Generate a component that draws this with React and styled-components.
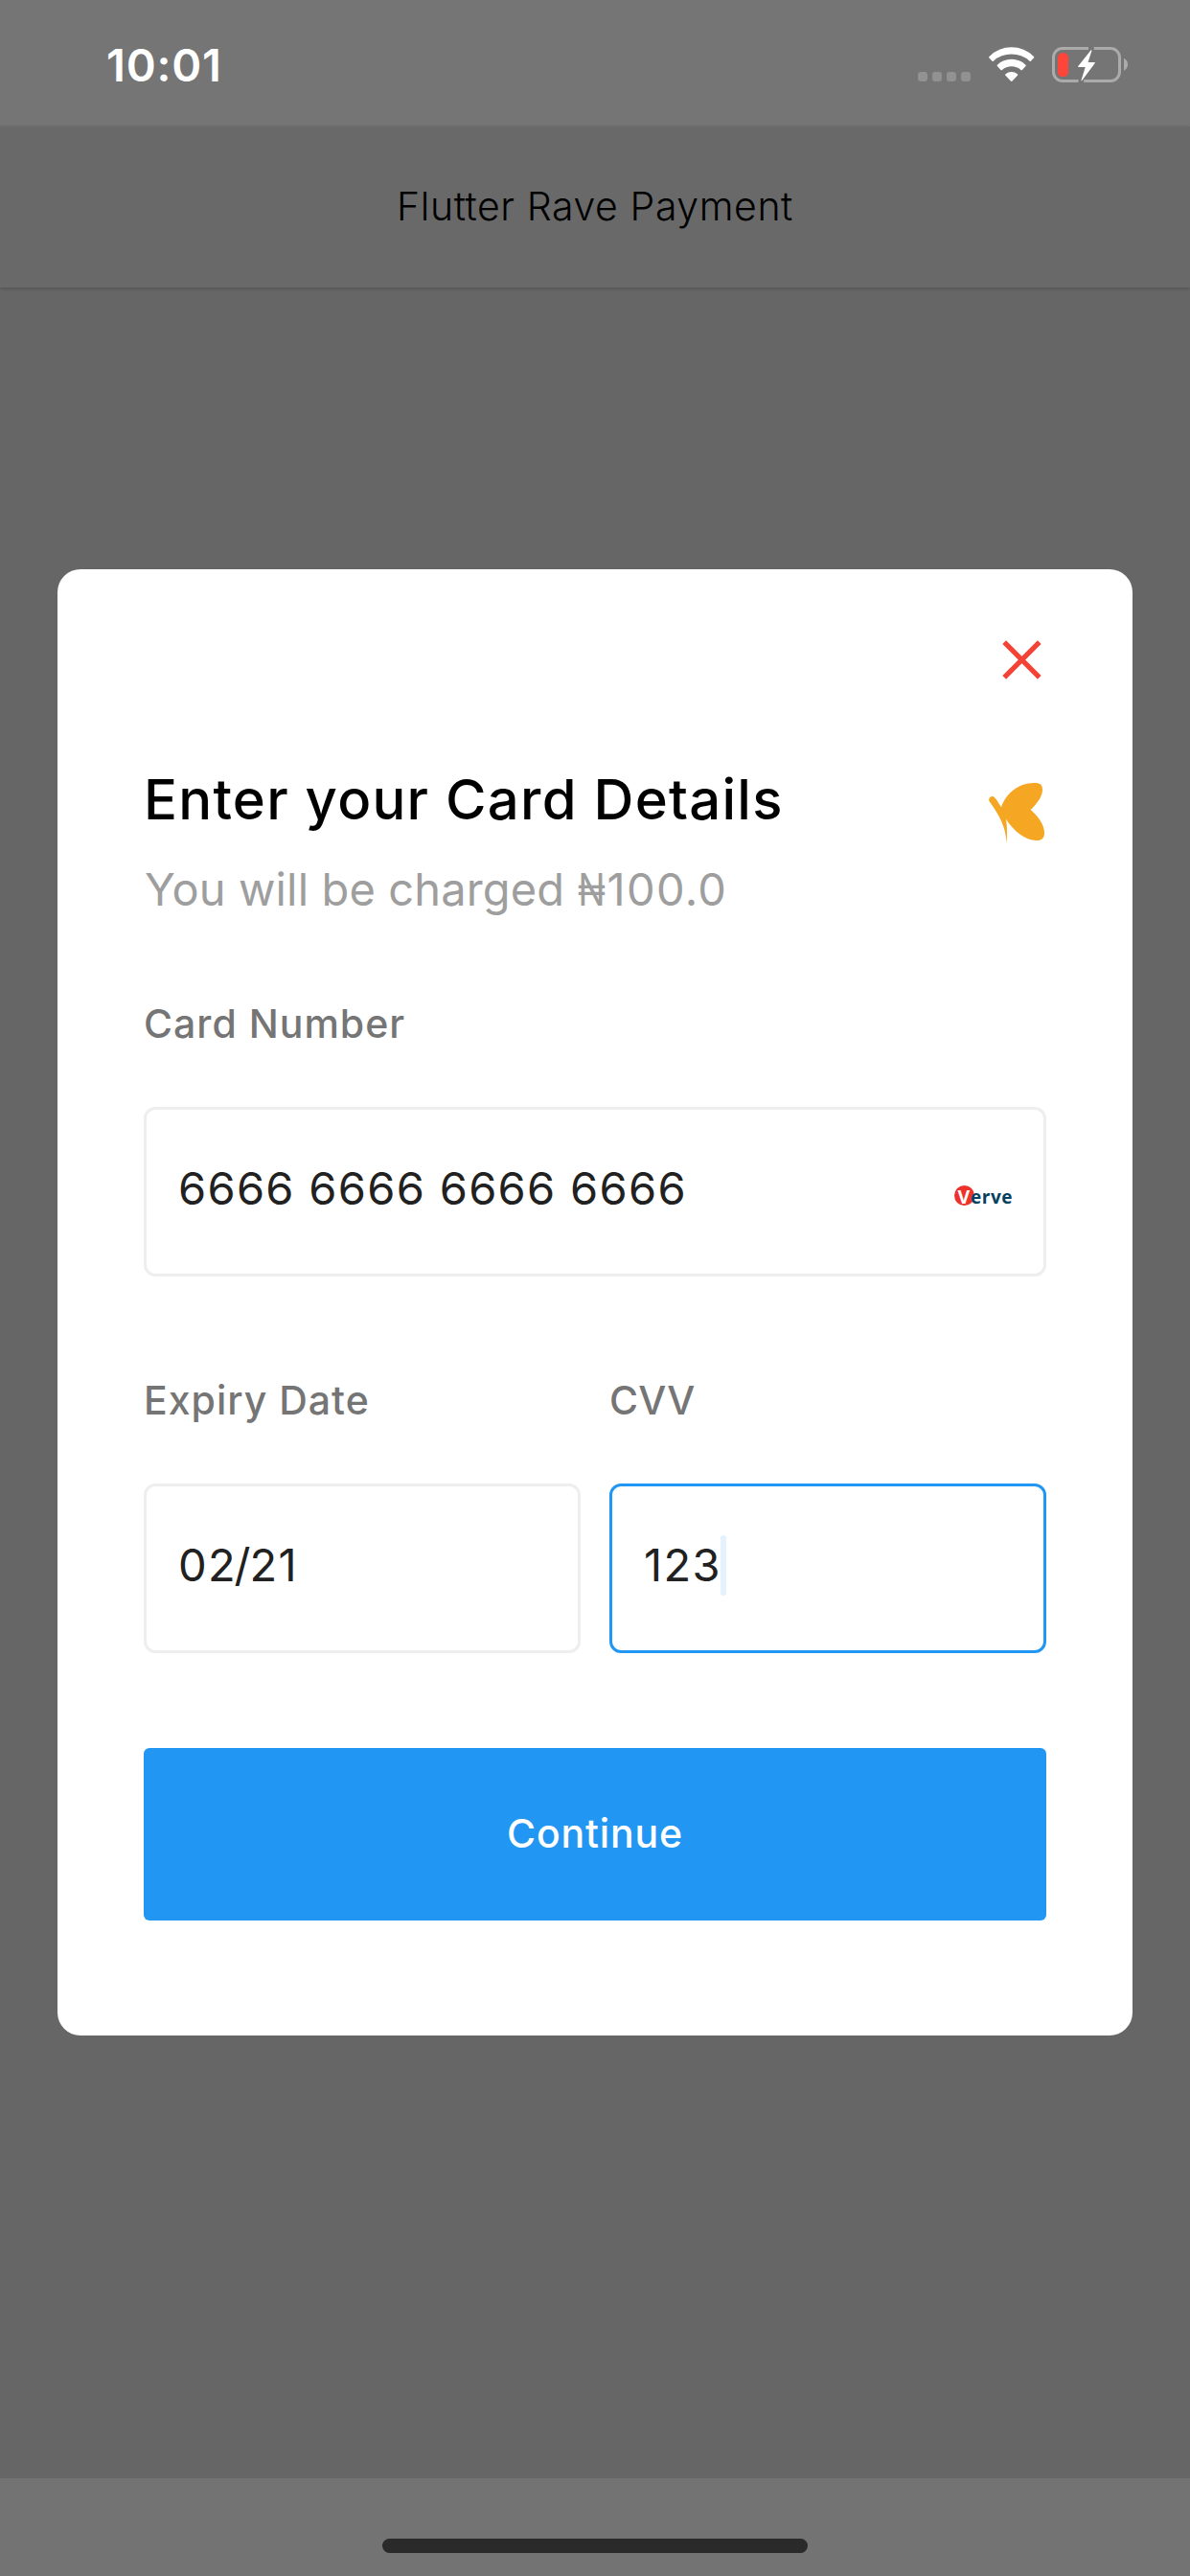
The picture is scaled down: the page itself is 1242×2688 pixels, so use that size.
import React from 'react';
import styled, { createGlobalStyle } from 'styled-components';

const GlobalStyle = createGlobalStyle`
  * { box-sizing: border-box; }
  body { margin: 0; background: #666; font-family: Inter, Roboto, sans-serif; }
  h1, h2, p { margin: 0; }
`;

const Screen = styled.div`
  width: 1242px;
  height: 2688px;
  display: flex;
  flex-direction: column;
  background: #666666;
  overflow: hidden;
`;

const StatusBar = styled.div`
  height: 132px;
  flex: none;
  display: flex;
  justify-content: space-between;
  padding: 0 63px 0 111px;
  background: #757575;
`;

const Time = styled.div`
  padding-top: 38px;
  font-size: 47px;
  line-height: 60px;
  font-weight: 600;
  letter-spacing: 0.78px;
  color: #fff;
`;

const StatusIcons = styled.div`
  display: flex;
  align-items: flex-start;
  padding-top: 49px;
`;

const Signal = styled.div`
  display: flex;
  gap: 5px;
  margin: 26px 18.5px 0 0;
`;

const SignalDot = styled.i`
  width: 10px;
  height: 10px;
  border-radius: 3px;
  background: #929292;
`;

const BatteryWrap = styled.span`
  display: flex;
  margin-left: 18.5px;
`;

const AppBar = styled.header`
  height: 168px;
  flex: none;
  display: flex;
  justify-content: center;
  padding-top: 55px;
  background: #696969;
  box-shadow: 0 1px 4px rgba(0, 0, 0, 0.22);
`;

const AppTitle = styled.h1`
  font-size: 41px;
  line-height: 56px;
  font-weight: 300;
  letter-spacing: 0.58px;
  color: #000;
`;

const Content = styled.main`
  flex: 1;
  padding: 294px 60px 0;
`;

const Dialog = styled.section`
  height: 1530px;
  padding: 74px 90px 0;
  border-radius: 24px;
  background: #fff;
`;

const CloseRow = styled.div`
  display: flex;
  justify-content: flex-end;
  height: 41px;
  padding-right: 5px;
`;

const Heading = styled.div`
  display: flex;
  justify-content: space-between;
  align-items: flex-start;
  margin-top: 89px;
  padding-right: 1px;
`;

const Logo = styled.svg`
  margin-top: 19px;
`;

const Title = styled.h2`
  font-size: 58px;
  line-height: 72px;
  font-weight: 500;
  letter-spacing: 1.27px;
  color: #000;
`;

const Charge = styled.p`
  margin-top: 30px;
  padding-left: 1px;
  font-size: 47px;
  line-height: 56px;
  letter-spacing: 0.13px;
  color: #9e9e9e;
  white-space: nowrap;
`;

const Amount = styled.span`
  letter-spacing: 1.31px;
`;

const Naira = styled.span`
  display: inline-block;
  width: 31px;
  transform: scaleX(0.8);
  transform-origin: left;
`;

const Fields = styled.div`
  display: grid;
  grid-template-columns: 1fr 1fr;
  gap: 105px 30px;
  margin-top: 88px;
`;

const FieldGroup = styled.label`
  display: flex;
  flex-direction: column;
  gap: 63px;
  grid-column: ${(p) => (p.$wide ? '1 / -1' : 'auto')};
`;

const Label = styled.span`
  font-size: 41px;
  line-height: 48px;
  font-weight: 500;
  letter-spacing: ${(p) => p.$tracking || 1}px;
  color: #757575;
`;

const Box = styled.span`
  display: flex;
  align-items: center;
  justify-content: space-between;
  height: 177px;
  padding: 0 33px;
  border: 3px solid ${(p) => (p.$active ? '#2196f3' : '#eeeeee')};
  border-radius: 12px;
`;

const Value = styled.span`
  display: flex;
  align-items: center;
  padding-bottom: 7px;
  font-size: 47px;
  line-height: 60px;
  letter-spacing: 1.31px;
  color: #212121;
`;

const Slash = styled.span`
  margin: 0 -2.4px;
`;

const Caret = styled.i`
  width: 6px;
  height: 63px;
  margin-left: -1px;
  border-radius: 3px;
  background: #e3f2fd;
`;

const Verve = styled.svg`
  margin-top: 8px;
  overflow: visible;
`;

const Submit = styled.button`
  display: block;
  width: 100%;
  height: 180px;
  margin-top: 99px;
  padding: 0 0 2px;
  border: 0;
  border-radius: 6px;
  background: #2196f3;
  color: #fff;
  font: 500 41px/48px Inter, Roboto, sans-serif;
  letter-spacing: 0.84px;
`;

const HomeArea = styled.footer`
  height: 102px;
  flex: none;
  display: flex;
  justify-content: center;
  padding-top: 63px;
  background: #737373;
`;

const HomeBar = styled.div`
  width: 444px;
  height: 15px;
  border-radius: 8px;
  background: #2a2a2a;
`;

const WifiIcon = () => (
  <svg width="48" height="36" viewBox="0 0 48 36" fill="#fff">
    <path d="M.5 9.9A33 33 0 0 1 46.9 9.9Q47.7 10.6 46.9 11.4L43.9 14.8Q43.3 15.3 42.6 14.7A28.4 28.4 0 0 0 4.8 14.7Q4.1 15.3 3.5 14.8L.5 11.4Q-.3 10.6 .5 9.9Z" />
    <path d="M8.9 18.7A21.5 21.5 0 0 1 38.5 18.7Q39.2 19.4 38.5 20.1L34.9 24Q34.2 24.7 33.5 24A15 15 0 0 0 13.9 24Q13.2 24.7 12.5 24L8.9 20.1Q8.2 19.4 8.9 18.7Z" />
    <path d="M17.5 28.2A9.5 9.5 0 0 1 29.9 28.2Q30.7 28.9 30 29.7L24.5 35.5Q23.7 36.3 22.9 35.5L17.4 29.7Q16.7 28.9 17.5 28.2Z" />
  </svg>
);

const BatteryIcon = () => (
  <svg width="81" height="37" viewBox="0 0 81 37">
    <g fill="none" stroke="#ababab" strokeWidth="3">
      <path d="M38 1.5H11A9.5 9.5 0 0 0 1.5 11V26A9.5 9.5 0 0 0 11 35.5H27.6" />
      <path d="M43.8 1.5H61A9.5 9.5 0 0 1 70.5 11V26A9.5 9.5 0 0 1 61 35.5H33.2" />
    </g>
    <path fill="#ababab" d="M75 11.7C80.4 14.4 80.4 22 75 24.8Z" />
    <rect x="6" y="6.3" width="11" height="24.7" rx="4.6" fill="#ff453a" />
    <path fill="#fff" d="M40.7 3.3L27.1 20.2Q26.9 21 27.7 21H34.7L30.5 34.8Q30.6 35.7 31.3 35L44.9 16.8Q45 16 44.3 16H37.6L41.4 3.9Q41.5 3 40.7 3.3Z" />
  </svg>
);

const CloseIcon = () => (
  <svg width="41" height="41" viewBox="0 0 41 41">
    <path d="M2.2 2.2L38.8 38.8M38.8 2.2L2.2 38.8" stroke="#f44336" strokeWidth="5.2" />
  </svg>
);

const ButterflyLogo = () => (
  <Logo width="59" height="63" viewBox="0 0 59 63">
    <path
      fill="#f5a623"
      d="M13 25.3C17.5 12 30 0 47.3 0C53 0 56 1.2 56 7C56 14 50.5 21.5 43.7 28C51 34.5 58 43 58 52C58 57.5 55.5 60 50 60C37.5 60 25.5 49.5 17.8 37.5C19 42 19.3 52 18.7 62.7C17.7 50 14.7 38.5 .8 19.6C-.8 17.2 .8 14 3.8 14C6.8 14 10 21 13 25.3Z"
    />
  </Logo>
);

const VerveLogo = () => (
  <Verve width="60" height="21" viewBox="0 0 60 21" fontFamily="'Open Sans', 'Noto Sans', sans-serif" fontWeight="700">
    <circle cx="10.5" cy="10.5" r="10.5" fill="#ee312a" />
    <text x="3.6" y="18.5" fontSize="19.5" fill="#fff">V</text>
    <text x="17" y="18.7" fontSize="19" fill="#06405f" textLength="43.5">erve</text>
  </Verve>
);

export default function App() {
  return (
    <>
      <GlobalStyle />
      <Screen>
        <StatusBar>
          <Time>10:01</Time>
          <StatusIcons>
            <Signal>
              <SignalDot />
              <SignalDot />
              <SignalDot />
              <SignalDot />
            </Signal>
            <WifiIcon />
            <BatteryWrap>
              <BatteryIcon />
            </BatteryWrap>
          </StatusIcons>
        </StatusBar>
        <AppBar>
          <AppTitle>Flutter Rave Payment</AppTitle>
        </AppBar>
        <Content>
          <Dialog>
            <CloseRow>
              <CloseIcon />
            </CloseRow>
            <Heading>
              <div>
                <Title>Enter your Card Details</Title>
                <Charge>
                  You will be charged{' '}
                  <Amount>
                    <Naira>₦</Naira>100.0
                  </Amount>
                </Charge>
              </div>
              <ButterflyLogo />
            </Heading>
            <Fields>
              <FieldGroup $wide>
                <Label>Card Number</Label>
                <Box>
                  <Value>6666 6666 6666 6666</Value>
                  <VerveLogo />
                </Box>
              </FieldGroup>
              <FieldGroup>
                <Label>Expiry Date</Label>
                <Box>
                  <Value>
                    02<Slash>/</Slash>21
                  </Value>
                </Box>
              </FieldGroup>
              <FieldGroup>
                <Label $tracking={0.3}>CVV</Label>
                <Box $active>
                  <Value>
                    123
                    <Caret />
                  </Value>
                </Box>
              </FieldGroup>
            </Fields>
            <Submit>Continue</Submit>
          </Dialog>
        </Content>
        <HomeArea>
          <HomeBar />
        </HomeArea>
      </Screen>
    </>
  );
}
